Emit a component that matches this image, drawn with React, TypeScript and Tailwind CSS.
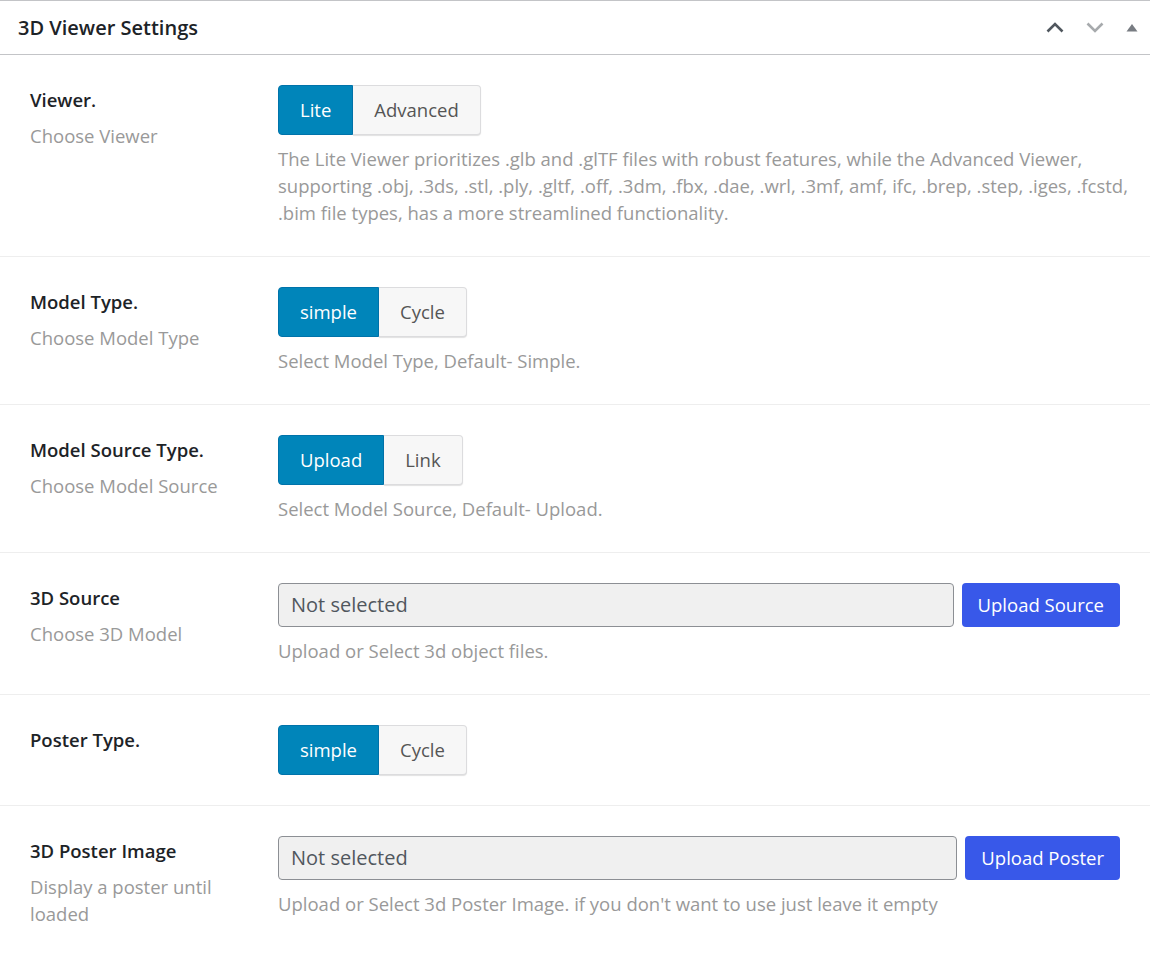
import React from 'react';

const font = { fontFamily: '"Open Sans", "Noto Sans", Arial, sans-serif' };

interface SegOption { label: string; active?: boolean; }

function Segmented({ options }: { options: SegOption[] }) {
  return (
    <div className="flex">
      {options.map((o, i) => (
        <div
          key={o.label}
          className={`h-[50px] px-[21px] flex items-center text-[18.5px] border ${
            o.active ? 'bg-[#0085ba] border-[#0073aa] text-white' : 'bg-[#f7f7f7] border-[#dcdcde] text-[#555] border-l-0'
          } ${i === 0 ? 'rounded-l-[4px]' : ''} ${i === options.length - 1 ? 'rounded-r-[4px] shadow-[0_1px_1px_rgba(0,0,0,0.12)]' : ''}`}
        >
          {o.label}
        </div>
      ))}
    </div>
  );
}

function Row({ label, sub, children, last }: { label: string; sub?: string; children: React.ReactNode; last?: boolean }) {
  return (
    <div className={`flex py-[30px] ${last ? '' : 'border-b border-[#eeeeee]'}`}>
      <div className="w-[278px] pl-[30px] pr-[10px] pt-[1px] shrink-0">
        <div className="text-[18.5px] leading-[27px] font-semibold text-[#1d2327]">{label}</div>
        {sub && <div className="mt-[9px] text-[18.5px] leading-[27px] text-[#999]">{sub}</div>}
      </div>
      <div className="flex-1 pr-[30px]">{children}</div>
    </div>
  );
}

function Desc({ children }: { children: React.ReactNode }) {
  return <p className="mt-[10px] -mr-[10px] text-[18.5px] leading-[27px] text-[#999]">{children}</p>;
}

function FileField({ button }: { button: string }) {
  return (
    <div className="flex gap-[8px]">
      <div className="flex-1 h-[44px] bg-[#f0f0f0] border border-[#8c8f94] rounded-[4px] flex items-center px-[12px] text-[20px] text-[#50575e]">
        Not selected
      </div>
      <button className="h-[44px] px-[16px] bg-[#3858e9] rounded-[4px] text-white text-[18.5px]">{button}</button>
    </div>
  );
}

export default function App() {
  return (
    <div className="w-[1150px] h-[955px] bg-white overflow-hidden" style={font}>
      <div className="h-[55px] border-t border-b border-[#c3c4c7] flex items-center justify-between pl-[18px] pr-[12px]">
        <h2 className="text-[20px] font-semibold text-[#1d2327]">3D Viewer Settings</h2>
        <div className="flex items-center gap-[22px]">
          <svg width="18" height="11" viewBox="0 0 18 11">
            <path d="M1.5 9.5 L9 2 L16.5 9.5" fill="none" stroke="#50575e" strokeWidth="2.6" />
          </svg>
          <svg width="18" height="11" viewBox="0 0 18 11">
            <path d="M1.5 1.5 L9 9 L16.5 1.5" fill="none" stroke="#a7aaad" strokeWidth="2.6" />
          </svg>
          <svg width="12" height="9" viewBox="0 0 12 9">
            <path d="M6 1 L11.5 8.5 L0.5 8.5 Z" fill="#787c82" />
          </svg>
        </div>
      </div>

      <Row label="Viewer." sub="Choose Viewer">
        <Segmented options={[{ label: 'Lite', active: true }, { label: 'Advanced' }]} />
        <Desc>
          The Lite Viewer prioritizes .glb and .glTF files with robust features, while the Advanced Viewer, supporting .obj, .3ds, .stl, .ply, .gltf, .off, .3dm, .fbx, .dae, .wrl, .3mf, amf, ifc, .brep, .step, .iges, .fcstd, .bim file types, has a more streamlined functionality.
        </Desc>
      </Row>

      <Row label="Model Type." sub="Choose Model Type">
        <Segmented options={[{ label: 'simple', active: true }, { label: 'Cycle' }]} />
        <Desc>Select Model Type, Default- Simple.</Desc>
      </Row>

      <Row label="Model Source Type." sub="Choose Model Source">
        <Segmented options={[{ label: 'Upload', active: true }, { label: 'Link' }]} />
        <Desc>Select Model Source, Default- Upload.</Desc>
      </Row>

      <Row label="3D Source" sub="Choose 3D Model">
        <FileField button="Upload Source" />
        <Desc>Upload or Select 3d object files.</Desc>
      </Row>

      <Row label="Poster Type.">
        <Segmented options={[{ label: 'simple', active: true }, { label: 'Cycle' }]} />
      </Row>

      <Row label="3D Poster Image" sub="Display a poster until loaded" last>
        <FileField button="Upload Poster" />
        <Desc>Upload or Select 3d Poster Image. if you don't want to use just leave it empty</Desc>
      </Row>
    </div>
  );
}
